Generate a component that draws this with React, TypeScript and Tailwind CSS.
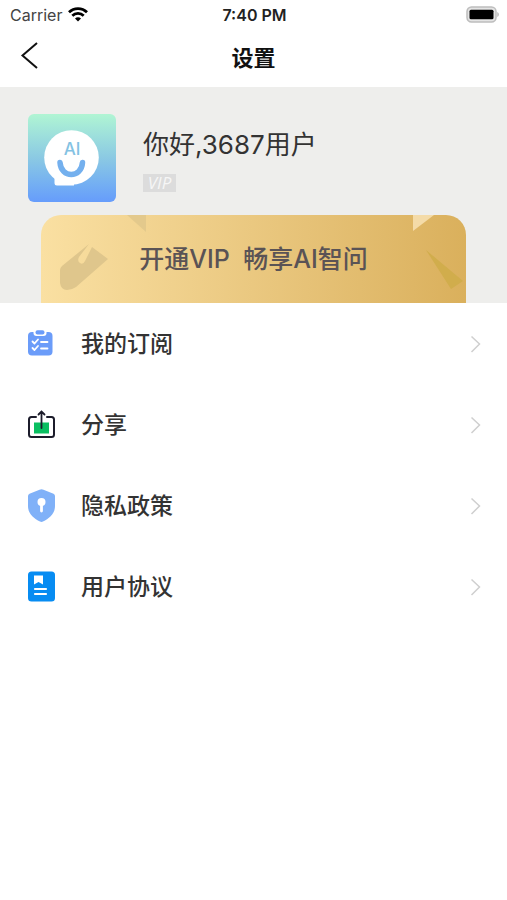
import type { ReactNode } from "react";

type MenuItem = { label: string; href: string; icon: ReactNode };

const items: MenuItem[] = [
  { label: "我的订阅", href: "#subscription", icon: <SubscriptionIcon /> },
  { label: "分享", href: "#share", icon: <ShareIcon /> },
  { label: "隐私政策", href: "#privacy", icon: <PrivacyIcon /> },
  { label: "用户协议", href: "#terms", icon: <TermsIcon /> },
];

export default function App() {
  return (
    <div className="min-h-screen bg-white text-[#333333] font-[Inter,'Noto_Sans_CJK_SC',sans-serif]">
      <StatusBar />

      <header className="grid grid-cols-3 items-center h-[57px] px-5">
        <button type="button" aria-label="返回" className="w-6">
          <svg viewBox="0 0 24 30" className="w-6 h-[30px] -mt-2" fill="none" stroke="#111" strokeWidth="2">
            <path d="M17 3 2.500 15.500 17 28" />
          </svg>
        </button>
        <h1 className="text-center text-[22px] font-bold text-[#111111]">设置</h1>
      </header>

      <main>
        <section className="bg-[#eeeeec] pt-[27px]">
          <div className="flex px-7">
            <Avatar />
            <div className="ml-[27px] pt-3">
              <p className="text-[26px] leading-[38px] text-[#333333]">你好,3687用户</p>
              <span className="mt-[10px] block w-[33px] h-[18px] bg-[#dcdcdc] text-center text-[17px] leading-[18px] italic text-[#f6f6f6] font-['Open_Sans',sans-serif]">
                VIP
              </span>
            </div>
          </div>

          <a
            href="#vip"
            className="relative mt-[13px] mx-[41px] flex h-[88px] items-center justify-center overflow-hidden rounded-t-[20px] bg-linear-to-r from-[#fae0a2] to-[#dab05c]"
          >
            <BannerShapes />
            <span className="relative whitespace-pre text-[25px] leading-10 font-medium text-[#5a5355]">开通VIP  畅享AI智问</span>
          </a>
        </section>

        <nav>
          <ul>
            {items.map((item) => (
              <li key={item.label}>
                <a href={item.href} className="flex h-[81px] items-center pl-[26px] pr-[25px]">
                  {item.icon}
                  <span className="ml-[25px] flex-1 text-[23px] leading-9 font-medium">{item.label}</span>
                  <svg viewBox="0 0 14 20" className="w-[14px] h-5" fill="none" stroke="#cfcfcf" strokeWidth="1.5">
                    <path d="M3.500 2.500 11.500 10l-8 8" />
                  </svg>
                </a>
              </li>
            ))}
          </ul>
        </nav>
      </main>
    </div>
  );
}

function StatusBar() {
  return (
    <div className="grid grid-cols-3 items-center h-[30px] pl-[10px] pr-2 text-base text-[#222222]">
      <div className="flex items-center gap-[6px]">
        <span className="text-[#444444]">Carrier</span>
        <svg viewBox="0 0 20 15" className="w-5 h-[15px] -mt-0.5" fill="none" stroke="#000" strokeWidth="2.7">
          <path d="M1 5.300a12.700 12.700 0 0 1 18 0" />
          <path d="M4.300 8.800a8 8 0 0 1 11.400 0" />
          <path d="M7 11.500a4.200 4.200 0 0 1 6 0l-3 3z" fill="#000" stroke="none" />
        </svg>
      </div>
      <span className="text-center font-semibold">7:40 PM</span>
      <svg viewBox="0 0 33 17" className="w-[33px] h-[17px] justify-self-end -mt-0.5">
        <rect x="1" y="1" width="29" height="15" rx="4.500" fill="#e4e4e4" stroke="#bdbdbd" strokeWidth="1.500" />
        <rect x="3.500" y="3.800" width="24" height="9.400" rx="1.500" fill="#000" />
        <path d="M31.300 6v5c1-.5 1.500-1.500 1.500-2.500s-.5-2-1.500-2.500z" fill="#b5b5b5" />
      </svg>
    </div>
  );
}

function Avatar() {
  return (
    <div className="relative size-[88px] shrink-0 overflow-hidden rounded-[6px] bg-linear-to-b from-[#b0f5d3] via-[#8bc9e3] to-[#669cfb]">
      <svg viewBox="0 0 88 88" className="size-full">
        <circle cx="43.500" cy="43.500" r="27.300" fill="#fff" />
        <path d="M26.500 62v7q0 2.500 2.500 2.500h17V56z" fill="#fff" />
        <path d="M32 48.500c1 16 21.500 16 22.500 0" fill="none" stroke="#74b0ee" strokeWidth="5.500" strokeLinecap="round" />
      </svg>
      <span className="absolute inset-x-0 top-[26px] text-center text-[17px] leading-[18px] font-medium text-[#83c2e3]">AI</span>
    </div>
  );
}

function BannerShapes() {
  return (
    <>
      <svg viewBox="0 0 120 88" className="absolute left-0 top-0 w-[120px] h-[88px]">
        <path d="M86 0h19v17z" fill="#e3c98c" />
        <path
          d="M48 29 21 51q-2 2-2 4v13q1 7 7 7 5 0 9-3L67 44 51 32l-7 14q-2 4-5 2-3-2-1-6z"
          fill="#dfc68c"
        />
      </svg>
      <svg viewBox="0 0 60 88" className="absolute right-0 top-0 w-[60px] h-[88px]">
        <path d="M7 0h21L7 16z" fill="#f4dba8" />
        <path d="M20 35 57 66 45 74z" fill="#d1ad4c" />
      </svg>
    </>
  );
}

function SubscriptionIcon() {
  return (
    <svg viewBox="0 0 30 34" className="w-[30px] h-[34px]" fill="none">
      <rect x="2" y="5" width="24.500" height="23.500" rx="4" fill="#6b9cf9" />
      <path d="M7.500 3.500h13V6a3 3 0 0 1-3 3h-7a3 3 0 0 1-3-3z" fill="#fff" />
      <rect x="9.500" y="3.200" width="9" height="4.200" rx="2" fill="#6b9cf9" />
      <path
        d="m6.500 14.500 2 2 3.500-4M6.500 21l2 2 3.500-4M15 15h6.500M15 21.500h6.500"
        stroke="#fff"
        strokeWidth="1.800"
        strokeLinecap="round"
        strokeLinejoin="round"
      />
    </svg>
  );
}

function ShareIcon() {
  return (
    <svg viewBox="0 0 30 34" className="w-[30px] h-[34px]" fill="none">
      <rect x="8" y="14.500" width="15" height="11" fill="#0abf61" />
      <path
        d="M10 9H5.500a2.500 2.500 0 0 0-2.500 2.500v15A2.500 2.500 0 0 0 5.500 29h20a2.500 2.500 0 0 0 2.500-2.500v-15A2.500 2.500 0 0 0 25.500 9H21"
        stroke="#1c1c2b"
        strokeWidth="2"
        strokeLinecap="round"
      />
      <path d="M15.500 20V5M12.500 6.500l3-3 3 3" stroke="#1c1c2b" strokeWidth="1.800" strokeLinecap="round" />
    </svg>
  );
}

function PrivacyIcon() {
  return (
    <svg viewBox="0 0 30 34" className="w-[30px] h-[34px]">
      <path
        d="M13.500.8q2-.9 4 0l10 4Q29 5.500 29 7v10c0 8-6 12.500-12 15.500q-1.500.8-3 0C8 29.500 2 25 2 17V7q0-1.500 1.500-2.200z"
        fill="#80b1f8"
      />
      <circle cx="15.500" cy="13" r="4" fill="#fff" />
      <path d="M15.500 14v8" stroke="#fff" strokeWidth="2.800" strokeLinecap="round" />
    </svg>
  );
}

function TermsIcon() {
  return (
    <svg viewBox="0 0 30 34" className="w-[30px] h-[34px]">
      <rect x="2" y="1.500" width="27" height="30" rx="3.500" fill="#078cf2" />
      <path d="M8 5.500h9v9L12.500 12 8 14.500z" fill="#fff" />
      <path d="M9 19h11M9 24h11" stroke="#fff" strokeWidth="2.200" strokeLinecap="round" />
    </svg>
  );
}
